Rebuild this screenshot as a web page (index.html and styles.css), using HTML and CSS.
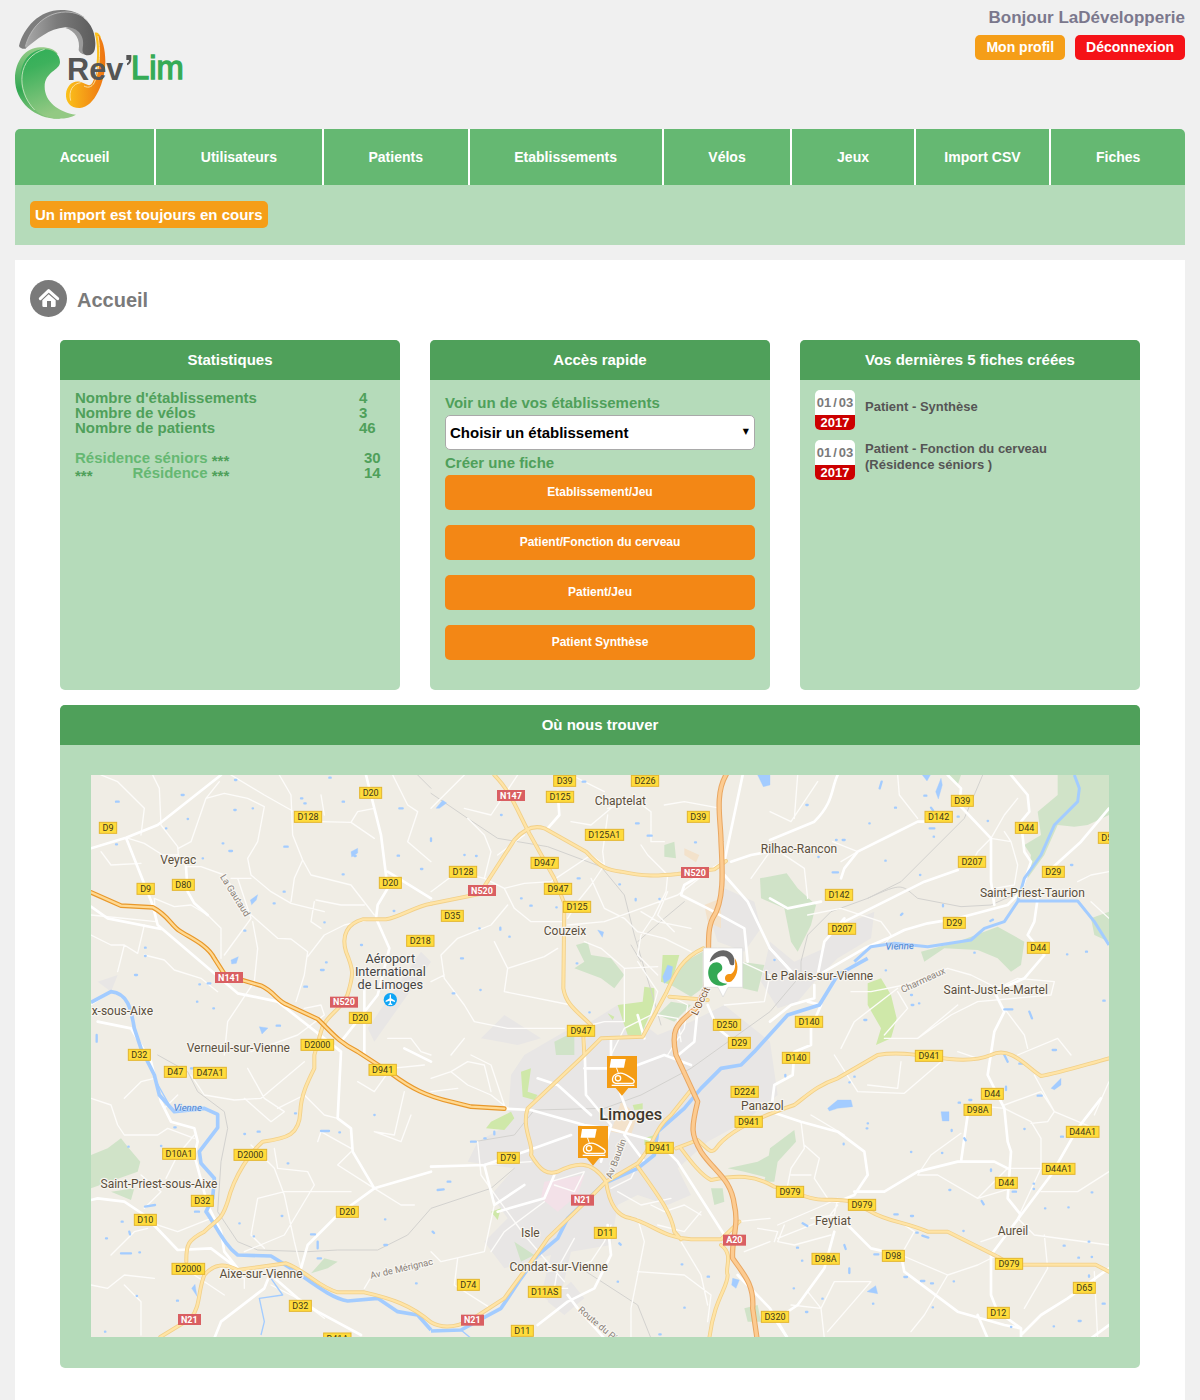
FILE: index.html
```html
<!DOCTYPE html>
<html lang="fr">
<head>
<meta charset="utf-8">
<meta name="viewport" content="width=device-width, initial-scale=1">
<title>Rev'Lim - Accueil</title>
<link rel="stylesheet" href="styles.css">
</head>
<body>
<header class="top">
  <a class="logo" href="#" aria-label="Rev'Lim">
    <svg viewBox="45 27 513 333" width="171" height="111">
      <defs>
        <linearGradient id="gGrey" x1="0" x2="1"><stop offset="0" stop-color="#a9a9a9"/><stop offset=".45" stop-color="#7b7b7b"/><stop offset="1" stop-color="#5b5b5b"/></linearGradient>
        <linearGradient id="gGreen" x1="0" y1="0" x2=".3" y2="1"><stop offset="0" stop-color="#2fae57"/><stop offset=".3" stop-color="#3db15c"/><stop offset="1" stop-color="#93c983"/></linearGradient>
        <linearGradient id="gEdge" x1="0" y1="0" x2="0" y2="1"><stop offset="0" stop-color="#95cb88"/><stop offset=".6" stop-color="#32a853"/><stop offset="1" stop-color="#8ac57c"/></linearGradient>
        <linearGradient id="gOrange" x1="0" x2="1"><stop offset="0" stop-color="#fbc21b"/><stop offset="1" stop-color="#ee7412"/></linearGradient>
      </defs>
      <path fill="#fcc01c" d="M284 98c8-3 14 3 18 12l-4 90-10 2c6-36 4-72-4-104z"/>
      <path fill="url(#gOrange)" d="M294 104c14 12 22 44 22 80 0 60-32 138-76 140-28 1-44-18-42-42 2-24 20-42 44-36 20 6 28 20 38-4 20-44 22-94 14-138z"/>
      <path fill="none" stroke="#fde0a0" stroke-width="3" d="M212 302c-8-30 8-52 30-54M294 108c8 40 6 90-8 132-6 20-20 26-34 18"/>
      <path fill="#7d7d7d" d="M57 138c14-56 62-108 126-108 30 0 52 8 70 22l-50 16c-60-10-96 26-126 78-8 2-18-2-20-8z"/>
      <path fill="#9a9a9a" d="M236 150c6-30-10-58-40-66l30-10c28 20 38 60 32 90-10 0-20-6-22-14z"/>
      <path fill="url(#gGrey)" d="M76 146C86 92 130 38 196 36c56 0 90 42 90 94 0 16-2 36-22 36-14 0-18-10-16-22 8-34-14-64-52-62-50 4-84 36-120 64z"/>
      <path fill="none" stroke="#d0d0d0" stroke-width="2" d="M76 140C90 86 132 38 196 36c30 0 52 10 66 26"/>
      <path fill="url(#gEdge)" d="M45 236c0-54 34-96 78-94 24 0 44 8 50 20l-40 20c-50 40-30 140 50 174-72 4-138-46-138-120z"/>
      <path fill="url(#gGreen)" d="M62 232c0-46 28-84 72-84 26 0 46 16 46 38 0 26-46 28-46 74 0 44 40 76 94 84-22 14-58 14-82 8-46-12-84-60-84-120z"/>
      <path fill="none" stroke="#b9e0b5" stroke-width="3" d="M104 330c-58-60-52-160 30-182"/>
      <text class="logo-rev" x="201" y="239">Rev</text>
      <path fill="#555" d="M379 165h15v12c0 10-5 16-13 19v-6c4-2 6-5 6-10h-8z"/>
      <text class="logo-lim" x="393" y="238">Lim</text>
    </svg>
  </a>
  <div class="user">
    <p class="hello">Bonjour LaDévelopperie</p>
    <div class="user-actions">
      <a class="btn btn-profile" href="#">Mon profil</a>
      <a class="btn btn-logout" href="#">Déconnexion</a>
    </div>
  </div>
</header>

<nav class="menu">
  <a href="#">Accueil</a>
  <a href="#">Utilisateurs</a>
  <a href="#">Patients</a>
  <a href="#">Etablissements</a>
  <a href="#">Vélos</a>
  <a href="#">Jeux</a>
  <a class="compact" href="#">Import CSV</a>
  <a href="#">Fiches</a>
</nav>
<div class="notice"><span class="notice-tag">Un import est toujours en cours</span></div>

<main class="page">
  <div class="page-title">
    <svg viewBox="0 0 111 111" width="37" height="37" aria-hidden="true">
      <circle cx="55.500" cy="55.500" r="55.500" fill="#7a7a7a"/>
      <path d="M31 56l25-24 27 24" fill="none" stroke="#fff" stroke-width="9" stroke-linecap="round" stroke-linejoin="round"/>
      <path fill="#fff" d="M56 43L37 61v16q0 4 4 4h10V63h12v18h10q4 0 4-4V61z"/>
    </svg>
    <h1>Accueil</h1>
  </div>

  <div class="cards">
    <section class="card">
      <h2>Statistiques</h2>
      <div class="card-body">
        <table class="stats stats-totals">
          <tr><th scope="row">Nombre d'établissements</th><td>4</td></tr>
          <tr><th scope="row">Nombre de vélos</th><td>3</td></tr>
          <tr><th scope="row">Nombre de patients</th><td>46</td></tr>
        </table>
        <table class="stats stats-homes">
          <tr><th scope="row"><a href="#">Résidence séniors</a> <span class="mask">***</span></th><td>30</td></tr>
          <tr><th scope="row"><span class="mask mask-lead">***</span><a href="#">Résidence</a> <span class="mask">***</span></th><td>14</td></tr>
        </table>
      </div>
    </section>

    <section class="card">
      <h2>Accès rapide</h2>
      <div class="card-body">
        <label class="field-label" for="etab">Voir un de vos établissements</label>
        <div class="select-wrap">
          <select id="etab"><option>Choisir un établissement</option></select>
        </div>
        <p class="field-label">Créer une fiche</p>
        <div class="quick">
          <a href="#">Etablissement/Jeu</a>
          <a href="#">Patient/Fonction du cerveau</a>
          <a href="#">Patient/Jeu</a>
          <a href="#">Patient Synthèse</a>
        </div>
      </div>
    </section>

    <section class="card">
      <h2>Vos dernières 5 fiches créées</h2>
      <div class="card-body">
        <ul class="sheets">
          <li><span class="date"><span class="day"><span>01</span><span>/</span><span>03</span></span><span class="year">2017</span></span><a href="#">Patient - Synthèse</a></li>
          <li><span class="date"><span class="day"><span>01</span><span>/</span><span>03</span></span><span class="year">2017</span></span><a href="#">Patient - Fonction du cerveau<br>(Résidence séniors )</a></li>
        </ul>
      </div>
    </section>
  </div>

  <section class="card card-map">
    <h2>Où nous trouver</h2>
    <div class="map-frame">
      <svg class="map" viewBox="0 0 3054 1686">
        <defs>
          <rect id="s2" class="sh" x="-26" y="-17" width="52" height="33"/>
          <rect id="s3" class="sh" x="-33" y="-17" width="66" height="33"/>
          <rect id="s4" class="sh" x="-41" y="-17" width="82" height="33"/>
          <rect id="s5" class="sh" x="-49" y="-17" width="98" height="33"/>
          <rect id="s6" class="sh" x="-57" y="-17" width="115" height="33"/>
          <rect id="r3" class="shr" x="-34" y="-17" width="69" height="33"/>
          <rect id="r4" class="shr" x="-42" y="-17" width="84" height="33"/>

          <g id="yellow">
            <path d="M1020 386C970 395 930 425 885 433H815C770 445 750 480 765 530C790 590 785 600 775 640C765 700 700 720 690 770L670 840V880C650 920 630 960 628 1010C625 1080 590 1090 515 1100C480 1130 430 1200 410 1280C390 1340 380 1330 340 1370C290 1395 285 1410 286 1460M208 1686L300 1630C330 1590 320 1550 340 1500C370 1465 400 1465 440 1485L585 1465C650 1490 680 1535 740 1552H820C900 1570 960 1590 1020 1642C1060 1665 1100 1655 1140 1635L1240 1570C1290 1500 1330 1450 1370 1390L1500 1265L1545 1220L1640 1165C1690 1110 1690 1060 1740 1020L1800 945"/>
            <path d="M1020 386L1165 357L1270 195C1300 160 1330 150 1360 160L1485 230C1530 280 1550 285 1590 290C1660 305 1700 303 1760 297L1870 283L1905 258"/>
            <path d="M1210 0C1260 50 1280 110 1315 175L1390 310L1420 385L1417 640C1425 690 1460 710 1500 750"/>
            <path d="M1480 840L1530 790L1655 785C1680 740 1700 700 1725 655C1750 600 1770 550 1837 520M1735 665L1850 675M1477 780L1480 840L1310 1000C1290 1060 1330 1110 1320 1140C1350 1190 1370 1200 1400 1190C1450 1165 1500 1150 1545 1220C1555 1290 1580 1325 1620 1330C1680 1345 1720 1390 1800 1393H1890L1945 1340M1640 1175C1700 1260 1740 1310 1750 1370L1770 1393M1755 1120L1820 1095C1850 1120 1860 1140 1875 1120C1910 1070 1990 1030 2110 990C2150 960 2180 930 2240 910L2360 840C2480 820 2600 880 2700 840C2760 810 2810 880 2850 903C2900 895 2980 870 3054 850M1770 1120C1800 1160 1830 1200 1860 1215C1940 1200 1990 1200 2050 1235L2110 1250C2190 1290 2220 1265 2280 1280L2340 1310C2390 1340 2440 1340 2510 1370H2570L2720 1445L2760 1469H3014L3054 1490M1890 1410C1930 1440 1900 1480 1910 1500C1910 1540 1870 1570 1855 1690"/>
          </g>
          <path id="motorway" d="M1905 0C1870 60 1890 140 1890 200C1895 290 1900 380 1865 430C1840 480 1865 560 1840 650L1815 700C1750 750 1740 770 1755 840L1820 980C1800 1060 1800 1080 1830 1130C1870 1190 1920 1210 1930 1290C1945 1350 1920 1400 1925 1450C1960 1500 1990 1530 1985 1600L1998 1690"/>
          <path id="trunk" d="M0 352L90 392L185 397C230 420 240 450 265 467C300 490 350 510 370 550L402 600L510 632C550 650 560 680 590 690L680 732C720 770 740 800 800 830L900 895C960 940 1010 965 1080 980L1140 995L1240 1001"/>
          <g id="bike">
            <path fill="#f49c14" d="M0 0h90v96H64L45 119 26 96H0z"/>
            <path fill="#fff" d="M12 9h44l-5 26H8z"/>
            <path fill="none" stroke="#fff" stroke-width="3" d="M28 34l7 20"/>
            <path fill="none" stroke="#fff" stroke-width="4" stroke-linejoin="round" d="M36 52c14-4 26 8 42 18 6 4 4 12-2 12H26c-14-4-14-26 10-30z"/>
            <circle cx="33" cy="67" r="8" fill="none" stroke="#fff" stroke-width="4"/>
            <path fill="#fff" d="M14 86h68v4H14z"/>
          </g>
        </defs>

        <rect class="land" width="3054" height="1686"/>

        <g class="urban">
          <path d="M1300 840L1420 770L1500 740L1580 690L1700 780L1800 740L1900 690L2037 800L2060 960L1960 1040L1850 1100L1760 1180L1800 1260L1730 1290L1640 1260L1580 1290L1560 1410L1440 1430L1400 1600L1350 1560L1380 1440L1240 1480L1180 1400L1250 1330L1200 1260L1270 1180L1130 1160L1160 1100L1250 1050L1260 900Z"/>
          <path d="M2037 500L2110 560L2200 520L2210 470L2350 410L2340 490L2240 550L2170 620L2120 680L2060 700L2010 620ZM1860 440L1900 340L1990 380L2010 460L1960 530L1880 500ZM1170 790L1240 720L1350 790L1280 810ZM830 760L990 530L1020 560L850 800ZM20 620L80 600L60 650ZM1370 1580L1440 1520L1480 1570L1420 1620Z"/>
        </g>
        <g class="built">
          <path d="M1360 1220L1480 1200L1460 1260L1400 1310L1350 1270Z" fill="#f3e1e8"/>
          <path d="M1590 980L1640 1020L1620 1080L1560 1070ZM1780 220L1825 240L1815 262L1780 240ZM1840 390L1890 370V460L1850 440Z" fill="#f3e2cb"/>
        </g>
        <g class="green">
          <path d="M1455 510L1490 500L1500 540L1560 550L1600 600L1570 640L1530 610L1450 580L1480 560ZM1720 210L1750 200L1755 250L1720 245ZM1740 630L1780 560L1835 530V640L1800 665ZM1700 720L1740 680L1800 690L1750 740ZM2007 310L2087 295L2120 340L2175 390L2160 450L2120 530L2100 500L2080 400L2010 370ZM1950 560L2020 570L2000 650L1955 640ZM1390 800L1450 770V840H1395Z"/>
          <path d="M2900 0H3054V120L2990 150L2950 155L2900 150L2860 240L2810 310L2820 240L2800 210L2850 180L2840 110L2900 60ZM2600 500L2720 455L2800 500L2790 570L2760 590L2720 550L2660 525L2560 520L2500 560L2490 530ZM2570 0L2610 0L2600 30ZM3000 430L3054 410V500L3010 480Z"/>
          <path d="M0 1140L50 1120L90 1090L110 1115L148 1160L140 1190L0 1240ZM60 1250L130 1240L120 1275ZM660 1495L700 1450L740 1460L710 1480ZM1860 1240L1895 1240L1900 1280L1870 1290ZM1910 1180L2000 1160L2037 1140V1210L1960 1190ZM2037 1120L2110 1065L2115 1100L2060 1160L2050 1220H2020ZM1960 1600L2000 1590L2010 1640L1970 1640ZM1270 1400L1330 1440L1290 1460Z"/>
        </g>
        <g class="park">
          <path d="M1715 540L1765 540L1740 630L1710 620ZM1580 690L1655 680L1660 635L1690 640L1690 690L1650 780L1610 780ZM1290 890L1320 880L1310 950L1340 960L1330 975L1295 965ZM1200 1040L1260 1010L1270 1030L1240 1065L1185 1060ZM1200 1310L1230 1300L1220 1335ZM1625 990L1655 985V1003L1630 1005ZM1660 1090L1690 1080L1690 1110L1660 1110ZM1550 715L1570 725L1565 735ZM2330 625L2370 610L2400 660L2417 730L2400 790L2355 810L2370 760L2330 690Z"/>
        </g>

        <g class="rail">
          <path d="M1020 55L1130 130L1220 190L1370 215L1530 275L1600 360L1630 480L1690 680L1710 750M2675 0L2620 130L2430 320L2330 370L2220 410L2150 480L2130 560V600L2037 710L1800 880L1650 960L1540 1000L1330 1005L1270 1080L1150 1100M2330 370C2440 320 2430 330 2480 370L2610 395L2700 390L2790 350M200 840L290 890L320 950L400 1010L410 1060L390 1160L380 1310L440 1400L500 1425L650 1430L740 1425L860 1425L950 1380L1020 1300L1200 1240L1270 1180M1470 1480L1640 1590L1680 1690M1640 500L1720 430L1780 380M1620 510L1650 560M980 0L1020 40"/>
        </g>

        <g class="minor">
          <path d="M185 0L205 40L210 150L260 215L262 240L285 275L330 275L400 300L470 410L560 490L600 492L650 530L640 600L615 680M0 220L105 188L160 205L215 240L262 240M385 20L345 70L300 200L262 220M345 70L400 55L470 70L520 95L500 200L470 250L480 300L540 350L600 385L700 410M420 0L520 60L605 108M565 0L600 60L605 180L635 255L660 300L780 330L850 420M635 255L610 310L600 380M690 60L700 120M690 140L780 142L850 190M780 142L800 110L850 100M905 0L950 90L980 110L950 200L1020 260M855 430L760 450L700 480L650 545M190 370L250 395L300 390L350 420L390 460V550M190 370L195 440L0 420M160 540L220 555L250 585L330 610L380 650M100 510L140 535L160 450M0 480L60 510L100 510L80 590M0 690L60 650M420 310L480 310M485 440L500 520L490 620L410 740L400 840M440 310L480 430L400 540M670 380L660 440L690 460M675 375L750 390H820M30 230L60 270L150 265M640 700L690 690L700 720L620 780L480 830M890 790L960 790L990 830L1020 840M30 0L80 20L160 100L150 180"/>
          <path d="M1020 350L1100 290L1180 310L1240 340L1270 400L1320 440L1420 440M1120 100L1200 120L1280 0M1130 130L1180 180L1200 230L1180 310M1440 0L1540 50M1550 120L1535 230L1540 270L1500 330L1460 380L1430 430M1550 100L1640 80L1680 110L1680 200L1720 200M1650 210L1670 240L1730 300L1725 350L1690 420L1650 480L1640 540L1700 600M1500 310L1540 400L1600 430L1640 470L1720 490L1800 530M1540 440L1650 400L1760 360L1850 290M1540 440L1430 450M1540 270L1500 240L1380 320L1300 325L1240 340M1250 390L1200 450L1100 490L1050 540L1060 610L1120 690L1150 740L1250 760L1420 760M1210 500L1250 580L1360 545L1400 520M1060 600L1020 620M1120 790L1080 840M1250 580L1240 650L1440 690M1480 500L1530 520L1600 580L1700 575M1600 580V740L1540 740L1500 750M1640 560L1700 650L1680 720L1600 760L1560 840M1730 660L1790 690L1780 760L1730 840M1700 720L1760 730L1770 800M1020 100L1120 0M1220 240L1300 180M1440 140L1500 150L1560 100M1890 100L1780 80L1720 90M1800 460L1700 440L1650 410M1750 470L1700 420L1730 350M1880 520L1950 560L2037 600L2020 680L1900 690M1980 310L2037 230"/>
          <path d="M2037 110L2100 140L2180 20M2120 0L2110 130M2420 0L2425 60L2480 130M2225 200L2300 230L2250 260M2050 220L2140 280L2150 370M2780 70L2740 120L2700 190L2660 230L2640 270M2700 190L2760 200L2780 270L2770 330L2710 340M2760 200L2740 170M2960 320L3000 300L3054 290M3000 380L3054 430M2280 650L2340 650L2440 630L2570 580L2640 600L2720 640M2480 790L2580 720L2660 680L2880 660L2890 620L2780 610L2720 640M2740 700L2800 780L2810 820M2380 790L2480 790L2600 690M2250 820L2290 740L2420 640M2420 650L2450 700L2380 780M2150 420L2250 400L2370 440L2400 480L2380 510M2780 840L2900 790L2940 840"/>
          <path d="M0 970L60 990L80 1050L100 1080L200 1080L230 1060L310 1090M100 970L150 920L190 910M300 900L340 960L430 975L510 970L640 860M460 970L540 1040L580 1010L520 970L470 880M560 1000L640 960L700 1020L740 1030M310 1080L260 1140L225 1210M480 1110L550 1180L580 1260L610 1400L630 1480M550 1120L560 1180L650 1190L670 1230L580 1380L460 1430M500 1270L580 1250L780 1250M500 1270L480 1380L520 1420M780 1120L690 1070L680 1100M780 1130L740 1170L850 1240L930 1290L970 1290M850 1070L910 1080L940 950M150 1200L210 1250L160 1300M170 1340L260 1370L360 1330M0 1530L50 1540L100 1500L190 1510M60 1440L130 1370L170 1360M100 1530L150 1580V1680M310 1500L400 1560M540 1530L620 1570L700 1630M820 1540L850 1490M1000 870L900 880L850 950L800 920M960 1020L930 1100L850 1070M260 960L220 1000M390 1480L460 1510V1540"/>
          <path d="M1020 910L1080 890L1130 930L1200 960L1250 1000M1080 890L1130 860L1180 870L1200 950M1020 950L1100 940M1140 840L1200 870L1240 990M1160 1100L1170 1200L1220 1270L1300 1380L1420 1520M1160 1170L1320 1160M1210 1290L1180 1430L1050 1460L1020 1430M1380 1220L1480 1190L1450 1250L1390 1230M1360 1280L1240 1370L1200 1430M1450 1390L1400 1480L1390 1540L1430 1540M1100 1450L1090 1530L1200 1600M1370 1490L1500 1460L1540 1400L1560 1350M1640 1330L1660 1400L1620 1600V1690M1640 1490L1780 1500L1860 1560L1850 1640M1770 1400L1830 1500L1850 1590M1680 1290L1720 1310L1780 1290L1830 1320M1830 1310L1780 1370L1700 1350M1560 1240L1620 1210L1640 1170M1580 1250L1650 1290L1740 1270M1940 1340L2037 1330M1960 1430L2037 1400M2000 1360L2060 1370L2050 1400M2260 1080L2160 1020"/>
          <path d="M2130 1040L2140 1120L2100 1180L2090 1230M2140 1110L2185 1150L2170 1210L2210 1270M2100 1200L2160 1200M2080 1350L2060 1400L2110 1410L2220 1380M2060 1350L2200 1290L2240 1270L2230 1320L2160 1330M2240 1290L2210 1330L2060 1390M2430 860L2420 940L2330 930M2230 840L2300 950L2440 955L2550 860M2660 850L2600 830M2740 990L2850 950L2890 1010L3010 1060M2640 990L2740 1000L2820 1040L2850 1090V1180L2780 1330L2830 1380L3054 1410M2830 900L2890 1010L2870 1040L2820 1045M2660 1270L2750 1180L2880 1180M2480 1200L2520 1140L2610 1075M2480 1200L2540 1200L2660 1270L2760 1240M2720 1440L2660 1470L2570 1500L2500 1620L2460 1670M2570 1500L2430 1440L2470 1370L2440 1350M2670 1400L2760 1370M2860 1380L2870 1480L2800 1600M3010 1490L3020 1690M2100 1590L2190 1600L2230 1520L2340 1520L2210 1670M2150 1550L2190 1600L2200 1690M3054 920L3010 1020M2850 1250L2960 1250L3054 1190"/>
        </g>
        <g class="major">
          <path d="M390 0L200 150L105 188L0 220M105 188L185 390L200 450L440 655L560 680L750 830L740 1030L780 1060L785 1130L850 1240L740 1320L650 1410L630 1480M0 395L50 430L210 462M855 430L860 390L890 340L870 180L825 0M855 430L895 520L860 660L750 800M890 290L1020 370M285 275L290 350L310 385L350 420M820 840V640M20 740L120 760L180 860L210 980L240 1040L310 1060L320 1100L310 1140L350 1290L390 1370L400 1430L440 1480L360 1420L260 1425L160 1320L100 1280L20 1270L0 1275M1020 1190L850 1240M540 1490L520 1540L390 1640L370 1690M540 1500L620 1570L680 1610L810 1680"/>
          <path d="M1955 0L1900 260L1780 330L1770 360L1850 400L1960 460L1970 560M1240 1001L1320 1005L1480 1050L1550 1060L1700 1100L1760 1160L1900 1380M1340 910L1400 930L1500 1020M1020 1175L1180 1170L1300 1130L1440 1080M1480 880L1560 880L1620 1040L1600 1080L1660 1160M1480 790L1485 960L1560 1050L1530 1160M1560 790V900L1720 840L1800 870M1220 1310L1360 1270L1390 1200M1550 1350L1560 1440L1510 1540L1430 1580L1340 1650M1430 1560L1460 1600L1540 1690M1940 1500L2037 1600L2090 1690M1400 50L1405 120L1370 160M1020 860L940 820M1180 1170L1210 1290L1300 1230M2037 230L1980 240L1920 260M1900 300L1970 380L2037 520L2110 600M1850 690L1880 760L1930 800M1820 700L1810 800L1750 850M1640 720L1660 790"/>
          <path d="M2037 195L2170 140C2230 80 2220 40 2240 0M2570 0L2610 40L2605 90L2700 190L2700 320L2710 390M2760 0L2810 60L2815 110L2790 140L2800 230L2820 260L2790 350L2750 390L2600 430L2510 445L2440 465L2390 490L2320 520L2200 590L2170 610L2120 610L2037 520M2180 600L2200 500L2260 430M2250 310L2260 280L2300 230L2400 180L2480 140H2520M2600 285L2500 320L2400 370L2260 440M2037 370L2090 400L2190 380M3054 100L2970 200L2860 300M2840 370L2830 440L2810 480L2860 540L2800 610L2710 650L2740 710L2710 770L2690 900L2740 1000L2750 1100L2760 1130L2750 1270L2790 1320L2700 1440L2700 1560L2720 1610L2790 1660V1686M2037 740L2100 690L2170 670V630M2150 680L2190 690L2160 760V810L2110 830L2105 900L2050 930L2040 1010L2130 1040L2240 1070L2320 1130L2330 1200L2290 1260L2240 1280L2160 1270M2290 1250L2380 1250L2480 1190L2600 1160L2710 1160L2750 1180M2630 1020L2610 1160M2790 1320L2880 1200L2960 1060L3030 970M2270 1350L2340 1420L2430 1440L2440 1490L2600 1610L2740 1650L2790 1660M2660 1620L2690 1690M2230 1370L2200 1480L2120 1590L2060 1630M2790 1680L2850 1620L2930 1570L3054 1480M3000 1690L3054 1650M2090 1690L2037 1610"/>
        </g>

        <g class="river">
          <path class="wide" d="M0 682L60 650C110 655 120 700 130 760L150 820L190 900L205 960L250 1010L340 1000L380 1018V1058L325 1130L330 1165L370 1210L365 1270L345 1310C380 1360 400 1410 440 1440L540 1443L600 1480C660 1520 720 1570 770 1578L860 1570L920 1610L980 1620L1020 1665"/>
          <path class="wide" d="M1020 1668L1110 1665L1230 1600L1290 1510L1340 1440L1400 1390L1430 1330L1540 1225L1640 1180L1690 1140L1700 1070L1780 1000L1830 940L1890 880L1950 870L1990 830L2090 720L2185 690L2240 600L2330 550"/>
          <path class="mid" d="M2290 560L2340 515L2410 505L2510 515L2640 495L2680 460L2740 440L2780 380L2800 310L2850 240L2890 150L2960 80L2965 40L2950 0M2780 378H2960L3010 440L3054 510"/>
          <path class="thin" d="M540 1510L575 1560L505 1570L520 1640L510 1680M1110 1665L1140 1690M190 910L235 990"/>
          <path class="lake" d="M1715 605L1730 570L1745 575L1740 610L1720 625ZM2000 0h37v30l-20 5ZM2210 1000L2240 975L2280 975L2285 995L2240 1000L2215 1008ZM1925 1510L1945 1515L1935 1540L1922 1530ZM2550 1010h24v28h-20ZM2880 940l30-30v20l-20 14ZM1035 100l20-24 12 8-22 16ZM478 375l22-16-4 16-14 14ZM505 755l26 4-18 18ZM2328 1550l26-18 6 24ZM2534 50l16-40 4 20-12 42ZM2494 0h24l-10 18ZM1520 465l18 6-4 16ZM420 555l22-10-6 20-14 2ZM780 230l20-10v14l-18 12ZM302 1540l10-12 6 36Z"/>
        </g>
        <g class="ponds">
          <path d="M75 80h8M272 60h6M432 15h4M430 105h4M630 70h4M640 85h4M715 8h4M755 80h4M925 100h10M415 228h8M580 215h10M75 208h3M225 160h1M395 205h2M548 385h3M578 350h3M755 298h3M790 243h4M920 242h4M990 282h4M908 408h2M132 600h6M162 518h2M162 543h2M350 625h8M325 628h2M460 467h3M640 635h8M690 585h8M705 562h2M810 510h3M557 752h10M367 700h2M318 680h1M17 780v20M700 442h1M335 250h1M485 100h1M290 132h1"/>
          <path d="M1475 20h8M1230 120h2M1120 240h1M1155 243h2M1460 310h6M1585 328h2M1290 370h2M1318 392h4M1396 397h1M1228 458v6M1165 460h1M1110 550h6M1457 565h2M1495 712h1M1085 655h5M1168 645h1M1635 145h8M1670 182h12M1812 202h3M1705 372h1M1634 372v4M1020 190v8M1255 485h1"/>
          <path d="M2366 40l6-20M2412 98h3M2335 145h1M2500 62h6M2600 125h3M2520 98l6 8M2516 160l14 0M2528 185h1M2255 195h6M2235 195h2M2225 292h16M2182 246h1M2383 257h1M2487 300h1M2690 138h1M2940 270h4M2556 390v4M2430 420l4-4M2650 533h1M2698 438l8-4M2384 586h1M2320 735h6M2460 660h3M2462 690h5M2484 685h1M2740 703h24M2815 710l8 20M3037 677h4M2928 538h1M2985 530h3M2885 825h10M2050 555h1M2150 90h-4"/>
          <path d="M250 1057h4M112 1115h1M460 1077h2M500 1070h6M690 1068h24M745 1072h2M590 1165h2M850 1020h1M612 1015h3M162 1295l30-5M312 1310h12M92 1340h3M115 1370l2 8M45 1390h3M90 1435h30M145 1432h2M572 1323h2M445 1345h1M488 1384h1M660 1378h12M680 1400v20M680 1450h10M882 1333h1M880 1410h8M975 1525h2M258 1577h3M42 1670h1M137 1563h1M210 1113h1M300 880h10M280 878h2"/>
          <path d="M1140 1100h14M1180 1090h4M1210 1070v8M1070 1220h8M1040 1245l18-2M1025 1370l4 4M1585 1405l4 4M1772 1468h2M1850 1505h4M1580 1520h1M1780 1598h1M1705 1678h4M1900 1422h1"/>
          <path d="M2083 900v4M2290 905h1M2275 922h1M2740 840l10 20M2785 866h8M2840 962h12M2635 975h6M2603 983h4M2745 935v10M2582 1065v3M2620 1090l4 6M2800 1062h1M2910 1085h6M2327 1060h2M2330 1045h1M2258 1106v2M2460 1131h1M2553 1134h1M2700 1183v5M2575 1245h3M2765 1250h10M2828 1226h1M2828 1242h1M3002 1252h2M2862 1300h1M2932 1297h1M2672 1278l6 10M2410 1318h10M2460 1323h6M2476 1373h4M2494 1382l18 6M2617 1368h1M2135 1345l14 8M2118 1418h3M2260 1410l4 12M2350 1438h12M2133 1457h1M2275 1480v14M2440 1506h8M2490 1518h10M2520 1525h6M2588 1519h1M2962 1448h2M2994 1501v4M2918 1412h3M2993 1400h2M3002 1446h1M3035 1586h6M2963 1638h6M2888 1654h1M2108 1540h1M2194 1571h1M2145 1611h4M2760 1656h1M2346 1586h1M2525 1597h1"/>
        </g>

        <g class="yellow-case"><use href="#yellow"/></g>
        <g class="yellow-fill"><use href="#yellow"/></g>
        <use href="#motorway" class="mway-case"/><use href="#motorway" class="mway-fill"/>
        <use href="#trunk" class="trunk-case"/><use href="#trunk" class="trunk-fill"/>

        <g class="shields">
          <g transform="translate(51 159)"><use href="#s2"/><text>D9</text></g>
          <g transform="translate(839 54)"><use href="#s3"/><text>D20</text></g>
          <g transform="translate(651 126)"><use href="#s4"/><text>D128</text></g>
          <g transform="translate(164 342)"><use href="#s2"/><text>D9</text></g>
          <g transform="translate(277 330)"><use href="#s3"/><text>D80</text></g>
          <g transform="translate(898 324)"><use href="#s3"/><text>D20</text></g>
          <g transform="translate(988 498)"><use href="#s4"/><text>D218</text></g>
          <g transform="translate(808 729)"><use href="#s3"/><text>D20</text></g>
          <g transform="translate(679 810)"><use href="#s5"/><text>D2000</text></g>
          <g transform="translate(145 840)"><use href="#s3"/><text>D32</text></g>
          <g transform="translate(1421 18)"><use href="#s3"/><text>D39</text></g>
          <g transform="translate(1662 18)"><use href="#s4"/><text>D226</text></g>
          <g transform="translate(1407 66)"><use href="#s4"/><text>D125</text></g>
          <g transform="translate(1822 126)"><use href="#s3"/><text>D39</text></g>
          <g transform="translate(1540 180)"><use href="#s6"/><text>D125A1</text></g>
          <g transform="translate(1361 264)"><use href="#s4"/><text>D947</text></g>
          <g transform="translate(1116 291)"><use href="#s4"/><text>D128</text></g>
          <g transform="translate(1401 342)"><use href="#s4"/><text>D947</text></g>
          <g transform="translate(1458 396)"><use href="#s4"/><text>D125</text></g>
          <g transform="translate(1084 423)"><use href="#s3"/><text>D35</text></g>
          <g transform="translate(1470 768)"><use href="#s4"/><text>D947</text></g>
          <g transform="translate(1908 750)"><use href="#s4"/><text>D250</text></g>
          <g transform="translate(1945 804)"><use href="#s3"/><text>D29</text></g>
          <g transform="translate(2614 78)"><use href="#s3"/><text>D39</text></g>
          <g transform="translate(2543 126)"><use href="#s4"/><text>D142</text></g>
          <g transform="translate(2806 159)"><use href="#s3"/><text>D44</text></g>
          <g transform="translate(3055 189)"><use href="#s3"/><text>D56</text></g>
          <g transform="translate(2643 261)"><use href="#s4"/><text>D207</text></g>
          <g transform="translate(2887 291)"><use href="#s3"/><text>D29</text></g>
          <g transform="translate(2244 360)"><use href="#s4"/><text>D142</text></g>
          <g transform="translate(2590 444)"><use href="#s3"/><text>D29</text></g>
          <g transform="translate(2253 462)"><use href="#s4"/><text>D207</text></g>
          <g transform="translate(2842 519)"><use href="#s3"/><text>D44</text></g>
          <g transform="translate(2154 741)"><use href="#s4"/><text>D140</text></g>
          <g transform="translate(2115 849)"><use href="#s4"/><text>D140</text></g>
          <g transform="translate(2514 843)"><use href="#s4"/><text>D941</text></g>
          <g transform="translate(253 891)"><use href="#s3"/><text>D47</text></g>
          <g transform="translate(357 894)"><use href="#s5"/><text>D47A1</text></g>
          <g transform="translate(875 885)"><use href="#s4"/><text>D941</text></g>
          <g transform="translate(264 1137)"><use href="#s5"/><text>D10A1</text></g>
          <g transform="translate(478 1140)"><use href="#s5"/><text>D2000</text></g>
          <g transform="translate(334 1278)"><use href="#s3"/><text>D32</text></g>
          <g transform="translate(163 1335)"><use href="#s3"/><text>D10</text></g>
          <g transform="translate(769 1311)"><use href="#s3"/><text>D20</text></g>
          <g transform="translate(292 1482)"><use href="#s5"/><text>D2000</text></g>
          <g transform="translate(628 1593)"><use href="#s3"/><text>D32</text></g>
          <g transform="translate(739 1691)"><use href="#s4"/><text>D41A</text></g>
          <g transform="translate(1961 951)"><use href="#s4"/><text>D224</text></g>
          <g transform="translate(1973 1041)"><use href="#s4"/><text>D941</text></g>
          <g transform="translate(1706 1119)"><use href="#s4"/><text>D941</text></g>
          <g transform="translate(1252 1149)"><use href="#s3"/><text>D79</text></g>
          <g transform="translate(1543 1374)"><use href="#s3"/><text>D11</text></g>
          <g transform="translate(1132 1530)"><use href="#s3"/><text>D74</text></g>
          <g transform="translate(1361 1551)"><use href="#s5"/><text>D11AS</text></g>
          <g transform="translate(1294 1668)"><use href="#s3"/><text>D11</text></g>
          <g transform="translate(2052 1626)"><use href="#s4"/><text>D320</text></g>
          <g transform="translate(2704 957)"><use href="#s3"/><text>D44</text></g>
          <g transform="translate(2660 1005)"><use href="#s4"/><text>D98A</text></g>
          <g transform="translate(2975 1071)"><use href="#s5"/><text>D44A1</text></g>
          <g transform="translate(2903 1182)"><use href="#s5"/><text>D44A1</text></g>
          <g transform="translate(2746 1224)"><use href="#s3"/><text>D44</text></g>
          <g transform="translate(2097 1251)"><use href="#s4"/><text>D979</text></g>
          <g transform="translate(2313 1290)"><use href="#s4"/><text>D979</text></g>
          <g transform="translate(2204 1452)"><use href="#s4"/><text>D98A</text></g>
          <g transform="translate(2407 1443)"><use href="#s3"/><text>D98</text></g>
          <g transform="translate(2754 1467)"><use href="#s4"/><text>D979</text></g>
          <g transform="translate(2980 1539)"><use href="#s3"/><text>D65</text></g>
          <g transform="translate(2722 1614)"><use href="#s3"/><text>D12</text></g>
        </g>
        <g class="shields shields-red">
          <g transform="translate(414 608)"><use href="#r4"/><text>N141</text></g>
          <g transform="translate(759 682)"><use href="#r4"/><text>N520</text></g>
          <g transform="translate(1260 62)"><use href="#r4"/><text>N147</text></g>
          <g transform="translate(1173 347)"><use href="#r4"/><text>N520</text></g>
          <g transform="translate(1812 293)"><use href="#r4"/><text>N520</text></g>
          <g transform="translate(295 1634)"><use href="#r3"/><text>N21</text></g>
          <g transform="translate(1144 1636)"><use href="#r3"/><text>N21</text></g>
          <g transform="translate(1474 1276)"><use href="#r3"/><text>N21</text></g>
          <g transform="translate(1930 1396)"><use href="#r3"/><text>A20</text></g>
        </g>

        <g class="towns">
          <text x="262" y="268">Veyrac</text>
          <text x="94" y="720">x-sous-Aixe</text>
          <text x="442" y="831">Verneuil-sur-Vienne</text>
          <text x="1588" y="90">Chaptelat</text>
          <text x="1422" y="480">Couzeix</text>
          <text x="2124" y="234">Rilhac-Rancon</text>
          <text x="2824" y="366">Saint-Priest-Taurion</text>
          <text x="2184" y="615">Le Palais-sur-Vienne</text>
          <text x="2714" y="657">Saint-Just-le-Martel</text>
          <text x="204" y="1239">Saint-Priest-sous-Aixe</text>
          <text x="510" y="1509">Aixe-sur-Vienne</text>
          <text x="1318" y="1386">Isle</text>
          <text x="1403" y="1488">Condat-sur-Vienne</text>
          <text x="2014" y="1005">Panazol</text>
          <text x="2226" y="1350">Feytiat</text>
          <text x="2766" y="1380">Aureil</text>
          <text class="airport" x="898" y="564">Aéroport</text>
          <text class="airport" x="898" y="603">International</text>
          <text class="airport" x="898" y="642">de Limoges</text>
          <text class="city" x="1619" y="1034">Limoges</text>
        </g>
        <g class="streets">
          <text transform="translate(424 366) rotate(58)">La Gautaud</text>
          <text transform="translate(2500 624) rotate(-25)">Charmeaux</text>
          <text transform="translate(1584 1154) rotate(-69)">Av Baudin</text>
          <text transform="translate(934 1490) rotate(-13)">Av de Mérignac</text>
          <text transform="translate(1520 1658) rotate(40)">Route du Pin</text>
          <text class="street-main" transform="translate(1838 682) rotate(-64)">L'Occit</text>
          <text class="water-name" transform="translate(2426 523) rotate(-2)">Vienne</text>
          <text class="water-name" transform="translate(290 1007)">Vienne</text>
        </g>

        <circle cx="898" cy="674" r="20" fill="#10a5f5"/>
        <path fill="#fff" d="M896 660q2-4 4 0v10l12 7v4l-12-4v8l4 3v3l-6-2-6 2v-3l4-3v-8l-12 4v-4l12-7z"/>

        <g transform="translate(1837 519)">
          <path fill="#fff" stroke="#d8d8d8" stroke-width="2" d="M0 0h118v118H74l-15 29-15-29H0z"/>
          <path fill="#666" d="M19 42C24 14 50 2 70 8c20 6 26 24 22 42-8 4-14 0-14-8-4-16-14-20-30-16-12 4-18 10-29 16z"/>
          <path fill="#33a854" d="M40 43c12 0 20 12 16 22-6 8-16 10-14 22 2 14 16 20 30 20-14 10-36 8-48-6-18-24-8-58 16-58z"/>
          <path fill="#f49414" d="M94 30c14 20 10 52-8 68-8 8-20 4-21-6 0-14 10-14 18-14 14-8 14-28 11-48z"/>
        </g>
        <use href="#bike" x="1548" y="843"/>
        <use href="#bike" x="1461" y="1053"/>
      </svg>
    </div>
  </section>
</main>
</body>
</html>
```
FILE: styles.css
```css
* { box-sizing: border-box; }

body {
  margin: 0;
  padding: 0 15px;
  min-height: 100vh;
  display: flex;
  flex-direction: column;
  background: #f0f0f0;
  font-family: "Liberation Sans", Arial, sans-serif;
  font-size: 15px;
  font-weight: bold;
  line-height: 15px;
  color: #4fa05a;
}

a { color: inherit; text-decoration: none; }
p, h1, h2, ul { margin: 0; padding: 0; }

/* Header */
.top { display: flex; justify-content: space-between; align-items: flex-start; padding: 9px 0; }
.logo, .logo svg { display: block; }
.logo-rev { font-size: 92px; fill: #555; }
.logo-lim { font-size: 98px; font-weight: normal; fill: #35ab56; stroke: #35ab56; stroke-width: 4px; }
.user { text-align: right; }
.hello { font-size: 17px; line-height: 18px; color: #7b788d; }
.user-actions { display: flex; justify-content: flex-end; gap: 10px; margin-top: 8px; }
.btn { padding: 0 11px; border-radius: 5px; font-size: 14px; line-height: 25px; color: #fff; }
.btn-profile { background: #f59e18; }
.btn-logout { background: #f51217; }

/* Main menu */
.menu { display: flex; gap: 2px; background: #fff; border-radius: 5px 5px 0 0; overflow: hidden; }
.menu a {
  flex: 1 1 auto;
  padding: 0 43px;
  background: #65b872;
  color: #fff;
  font-size: 14px;
  line-height: 56px;
  text-align: center;
  white-space: nowrap;
}
.menu .compact { padding: 0 27px; }
.notice { padding: 16px 15px 17px; background: #b5dbba; }
.notice-tag { display: inline-block; padding: 0 5px; border-radius: 5px; background: #f59e18; color: #fff; line-height: 27px; }

/* Page */
.page { flex: 1; margin-top: 15px; padding: 20px 45px 32px; background: #fff; }
.page-title { display: flex; align-items: center; gap: 10px; margin: 0 -30px 23px; }
.page-title h1 { font-size: 20px; line-height: 24px; padding-top: 2px; color: #7a7a7a; }

.cards { display: grid; grid-template-columns: repeat(3, 1fr); gap: 30px; margin-bottom: 15px; }
.card { background: #b5dbba; border-radius: 5px; overflow: hidden; }
.card h2 { background: #4fa05a; color: #fff; font-size: 15px; line-height: 40px; text-align: center; }
.card-body { padding: 10px 15px 30px; }

/* Statistics */
.stats { width: 100%; border-collapse: collapse; }
.stats th, .stats td { padding: 0; text-align: left; line-height: 15px; }
.stats-totals td { width: 26px; }
.stats-homes { margin-top: 15px; }
.stats-homes td { width: 21px; }
.stats-homes a { color: #65b872; }
.mask { line-height: 0; vertical-align: -3px; }
.mask-lead { margin-right: 40px; }

/* Quick access */
.field-label { display: block; line-height: 25px; }
.select-wrap { position: relative; }
.select-wrap::after { content: "▼"; position: absolute; right: 6px; top: 9px; font-family: "DejaVu Sans", sans-serif; font-size: 8px; color: #000; pointer-events: none; }
select {
  display: block;
  width: 100%;
  height: 35px;
  padding: 0 4px;
  border: 1px solid #a9a9a9;
  border-radius: 5px;
  background: #fff;
  color: #000;
  font: inherit;
  appearance: none;
}
.quick { display: grid; gap: 15px; }
.quick a { border-radius: 5px; background: #f38715; color: #fff; font-size: 12px; line-height: 35px; text-align: center; }

/* Latest sheets */
.sheets { display: grid; gap: 10px; list-style: none; }
.sheets li { display: flex; align-items: flex-start; gap: 10px; font-size: 13px; line-height: 16px; color: #555; }
.sheets a { display: flex; align-items: center; min-height: 34px; }
.date { flex: none; width: 40px; border-radius: 5px; overflow: hidden; background: #fff; text-align: center; }
.day { display: flex; justify-content: center; gap: 2px; line-height: 25px; color: #7a7a7a; }
.year { display: block; background: #c00; color: #fff; line-height: 15px; }

/* Map */
.map-frame { padding: 30px 31px 31px; }
.map { display: block; width: 100%; height: auto; font-family: Roboto, sans-serif; font-weight: normal; }
.land { fill: #f0ede5; }
.urban { fill: #e8e6e5; }
.green { fill: #d0e3c8; }
.park { fill: #cfe8a9; }
.rail, .minor, .major, .ponds, .yellow-case, .yellow-fill, .mway-case, .mway-fill, .trunk-case, .trunk-fill { fill: none; stroke-linejoin: round; stroke-linecap: round; }
.rail { stroke: #d3d2cf; stroke-width: 3px; }
.minor { stroke: #fdfcfa; stroke-width: 4px; }
.major { stroke: #fff; stroke-width: 8px; }
.river { fill: none; stroke: #a3ccff; stroke-linejoin: round; }
.wide { stroke-width: 11px; }
.mid { stroke-width: 9px; }
.thin { stroke-width: 4px; }
.lake { fill: #a3ccff; }
.ponds { stroke: #a3ccff; stroke-width: 7px; }
.yellow-case { stroke: #f1d08a; stroke-width: 12px; }
.yellow-fill { stroke: #ffe4a6; stroke-width: 7px; }
.mway-case { stroke: #e9a762; stroke-width: 16px; }
.mway-fill { stroke: #fccb91; stroke-width: 10px; }
.trunk-case { stroke: #e8982b; stroke-width: 14px; }
.trunk-fill { stroke: #ffd992; stroke-width: 7px; }
.sh { fill: #ffdc3c; stroke: #e3b52e; stroke-width: 3px; }
.shr { fill: #d95f62; }
.shields text { font-size: 27px; fill: #40391a; text-anchor: middle; dominant-baseline: central; }
.shields-red text { font-weight: bold; fill: #fff; }
.towns text, .streets text { text-anchor: middle; paint-order: stroke; stroke: #f7f5f0; stroke-width: 7px; stroke-linejoin: round; }
.towns text { font-size: 36px; fill: #5b4f3c; }
.towns .airport { font-size: 38px; fill: #444; }
.towns .city { font-size: 49px; font-weight: 500; fill: #40382b; }
.streets text { font-size: 28px; fill: #8a8178; }
.streets .street-main { font-size: 30px; fill: #7a5230; }
.streets .water-name { font-size: 29px; font-style: italic; fill: #4a82cf; stroke: #cfe2fb; stroke-width: 3px; }
```
